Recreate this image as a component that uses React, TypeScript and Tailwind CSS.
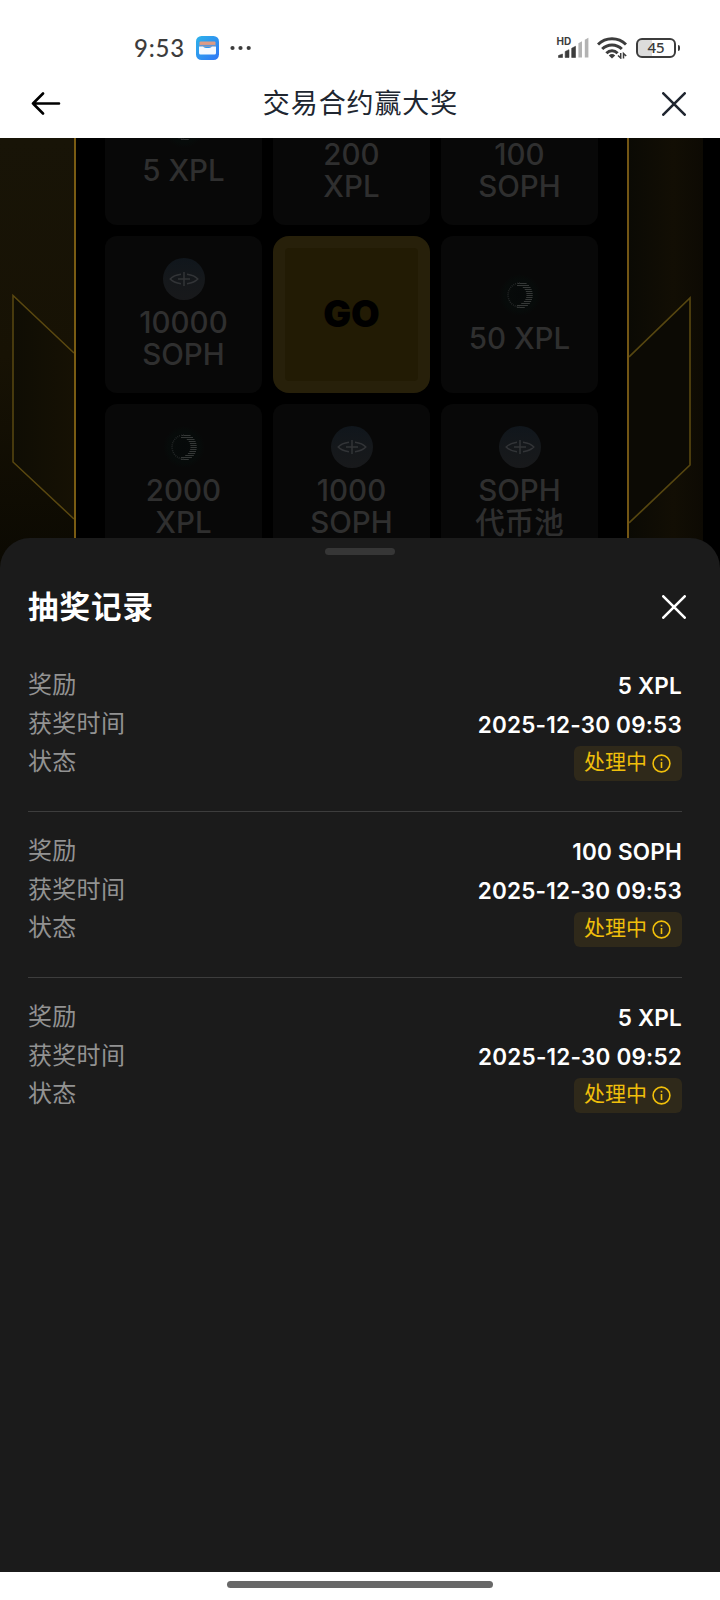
import type { ReactNode } from "react"

type Token = "soph" | "xpl"

interface Prize {
  token: Token
  lines: string[]
}

const ROWS_TOP: Prize[] = [
  { token: "xpl", lines: ["5 XPL"] },
  { token: "xpl", lines: ["200", "XPL"] },
  { token: "soph", lines: ["100", "SOPH"] },
  { token: "soph", lines: ["10000", "SOPH"] },
]

const ROWS_BOTTOM: Prize[] = [
  { token: "xpl", lines: ["50 XPL"] },
  { token: "xpl", lines: ["2000", "XPL"] },
  { token: "soph", lines: ["1000", "SOPH"] },
  { token: "soph", lines: ["SOPH", "代币池"] },
]

const RECORDS = [
  { reward: "5 XPL", time: "2025-12-30 09:53" },
  { reward: "100 SOPH", time: "2025-12-30 09:53" },
  { reward: "5 XPL", time: "2025-12-30 09:52" },
]

export default function App() {
  return (
    <div className="flex h-[1600px] w-[720px] flex-col overflow-hidden bg-white font-['Inter','Noto_Sans_CJK_SC',sans-serif]">
      <StatusBar />
      <Header />
      <PrizeBoard />
      <RecordSheet />
      <div className="flex h-7 shrink-0 justify-center bg-white pt-[9px]">
        <div className="h-[7px] w-[266px] rounded-full bg-[#686868]" />
      </div>
    </div>
  )
}

function StatusBar() {
  return (
    <div className="flex h-[70px] shrink-0 items-center justify-between pt-[26px] pr-[40px] pl-[134px] text-[#3c3c3c]">
      <div className="flex items-center">
        <span className="w-[62px] font-['Lato',sans-serif] text-[24px] leading-none font-medium tracking-[0.8px]">9:53</span>
        <svg width="23" height="24" viewBox="0 0 23 24">
          <defs>
            <linearGradient id="wallet" x1="0" y1="0" x2="1" y2="1">
              <stop offset="0" stopColor="#2eb4ea" />
              <stop offset="1" stopColor="#2f74f5" />
            </linearGradient>
          </defs>
          <rect width="23" height="24" rx="5.5" fill="url(#wallet)" />
          <rect x="3.500" y="5.5" width="16" height="5" rx="1" fill="#dd9b86" />
          <path d="M3 10.500h4c1 1 2.500 1.500 4.500 1.500s3.500-.5 4.500-1.500h4V17a1.500 1.500 0 0 1-1.500 1.500h-14A1.500 1.500 0 0 1 3 17z" fill="#f4f8ff" />
          <path d="M3.500 9.500h16" stroke="#5c95d8" strokeWidth="1.200" />
        </svg>
        <svg className="ml-[11px]" width="22" height="6" viewBox="0 0 22 6" fill="currentColor">
          <circle cx="2.500" cy="3" r="2.100" />
          <circle cx="10.500" cy="3" r="2.100" />
          <circle cx="18.700" cy="3" r="2.100" />
        </svg>
      </div>
      <div className="flex items-center">
        <svg className="overflow-visible" width="32" height="22" viewBox="0 0 32 22" fill="currentColor">
          <text x="-0.500" y="8" fontSize="10" fontWeight="700" fontFamily="Inter">HD</text>
          <path d="M1.500 20.500v-2l4-1.500v3.500zM8.200 20.500v-6l3.800-1.800v7.800zM14.700 20.500v-9.200l3.800-2v11.200z" stroke="currentColor" strokeLinejoin="round" strokeWidth=".6" />
          <path d="M21.400 20.500V6.200l3.600-2v16.300zM27.800 20.500V2.800l3.600-2v19.700z" fill="#b3b3b3" />
        </svg>
        <svg className="ml-[8px]" width="30" height="22" viewBox="0 0 30 22" fill="none" stroke="currentColor" strokeWidth="3">
          <path d="M1 7.500c7.700-7.700 20.300-7.700 28 0" />
          <path d="M5.200 12c5.400-5.500 14.200-5.500 19.600 0" />
          <path d="M9.400 16.200c3.200-3.200 8-3.200 11.200 0" />
          <path d="M11.800 18.500c2-1.900 4.400-1.900 6.400 0L15 21.500z" fill="currentColor" stroke="none" />
          <path d="M23.700 16v5l-2.700-2.500M26.500 21.500v-5l2.700 2.500" strokeWidth="1.500" />
        </svg>
        <div className="ml-[9px] flex h-[20px] w-[40px] items-center justify-center rounded-[6px] border-2 border-[#3c3c3c] bg-linear-to-r from-[#dcdcdc] from-40% to-white to-40%">
          <span className="-mt-px font-['Noto_Sans',sans-serif] text-[15px] leading-none font-medium">45</span>
        </div>
        <div className="ml-[2px] h-[6px] w-[2px] rounded-r bg-[#3c3c3c]" />
      </div>
    </div>
  )
}

function Header() {
  return (
    <header className="flex h-[68px] shrink-0 items-center justify-between pr-[34px] pl-[31px]">
      <svg width="30" height="24" viewBox="0 0 30 24" fill="none" stroke="#000" strokeWidth="2.600" strokeLinecap="round" strokeLinejoin="round">
        <path d="M28 11.500H2M12 1.500l-10 10 10 10" />
      </svg>
      <h1 className="-mt-px -ml-[2px] text-[27px] leading-none font-normal tracking-[0.900px] text-[#202630]">交易合约赢大奖</h1>
      <CloseIcon color="#202630" />
    </header>
  )
}

function CloseIcon({ color }: { color: string }) {
  return (
    <svg width="24" height="24" viewBox="0 0 24 24" fill="none" stroke={color} strokeWidth="2.600" strokeLinecap="round">
      <path d="M1.300 1.300l21.400 21.400M22.700 1.300 1.300 22.700" />
    </svg>
  )
}

function PrizeBoard() {
  return (
    <section className="flex h-[436px] shrink-0 overflow-hidden bg-black">
      {/* Left wing */}
      <div className="w-[76px] shrink-0 border-r-[2px] border-[#795b12] bg-linear-to-b from-[#181407] via-[#171204] to-[#0b0902]">
        <svg width="74" height="436" viewBox="0 0 74 436" fill="none">
          <defs>
            <linearGradient id="wingLeft" x1="0" x2="1">
              <stop offset="0" stopColor="#0f0d04" />
              <stop offset="1" stopColor="#161104" />
            </linearGradient>
          </defs>
          <path d="M13 157.500 74 215v166l-61-57z" fill="url(#wingLeft)" />
          <path d="M74 215 13 157.500V324l61 57" stroke="#5a4810" strokeWidth="1.500" />
        </svg>
      </div>

      <div className="-mt-[70px] grid h-[493px] w-[551px] shrink-0 grid-cols-[157px_157px_157px] grid-rows-[157px_157px_157px] gap-[11px] pl-[29px]">
        {ROWS_TOP.map((prize) => (
          <PrizeCard key={prize.lines.join(" ")} prize={prize} />
        ))}
        <div className="flex items-center justify-center rounded-2xl bg-[#27200a] p-3">
          <div className="flex h-full w-full items-center justify-center rounded-sm bg-[#221b04]">
            <span className="-mt-[2px] text-[37px] leading-none font-black text-black">GO</span>
          </div>
        </div>
        {ROWS_BOTTOM.map((prize) => (
          <PrizeCard key={prize.lines.join(" ")} prize={prize} />
        ))}
      </div>

      {/* Right wing */}
      <div className="w-[76px] shrink-0 border-l-[2px] border-[#735614] bg-linear-to-r from-[#0b0a04] via-[#120e04] via-60% to-[#0d0a03]">
        <svg width="74" height="436" viewBox="0 0 74 436" fill="none">
          <path d="M0 219 61 160v167L0 385z" fill="#0c0a04" />
          <path d="M0 219 61 160v167L0 385" stroke="#564610" strokeWidth="1.700" />
        </svg>
      </div>
    </section>
  )
}

function PrizeCard({ prize }: { prize: Prize }) {
  return (
    <div className="flex flex-col items-center justify-center rounded-xl bg-[#080808]">
      {prize.token === "soph" ? <SophIcon /> : <XplIcon />}
      <p className="mt-[7px] mb-px text-center text-[29.500px] leading-[31.500px] font-medium text-[#2f2f2f]">
        {prize.lines.map((line) => (
          <span key={line} className="block">{line}</span>
        ))}
      </p>
    </div>
  )
}

function SophIcon() {
  return (
    <svg width="42" height="42" viewBox="0 0 42 42" fill="none">
      <defs>
        <linearGradient id="soph" x1="0" y1="0" x2="0" y2="1">
          <stop offset="0" stopColor="#10161c" />
          <stop offset="0.500" stopColor="#15181b" />
          <stop offset="1" stopColor="#18191b" />
        </linearGradient>
      </defs>
      <circle cx="21" cy="21" r="21" fill="url(#soph)" />
      <g stroke="#323437" strokeWidth="1.500">
        <path d="M18 16.300C13 17 9 19 7.200 21c1.800 2 5.800 4 10.800 4.700M24 16.300c5 .7 9 2.700 10.800 4.700-1.800 2-5.800 4-10.800 4.700" />
        <path d="M21 14v14M15 21h12" />
      </g>
    </svg>
  )
}

// horizontal rays between an outer circle and a smaller one shifted left
const XPL_RAYS = Array.from({ length: 13 }, (_, i) => {
  const y = -11.5 + i * 2
  const outer = Math.sqrt(Math.max(0, 190 - y * y))
  const inner = Math.sqrt(Math.max(0, 90 - y * y)) - 3
  return { y: 21 + y, x1: 21 + inner, x2: 20 + outer }
})

function XplIcon() {
  return (
    <svg width="42" height="42" viewBox="0 0 42 42" fill="none">
      <defs>
        <radialGradient id="xpl">
          <stop offset="0" stopColor="#060909" />
          <stop offset="0.750" stopColor="#070b0a" />
          <stop offset="1" stopColor="#080808" />
        </radialGradient>
      </defs>
      <circle cx="21" cy="21" r="21" fill="url(#xpl)" />
      <g stroke="#353837" strokeWidth="1">
        {XPL_RAYS.map((ray) => (
          <path key={ray.y} d={`M${ray.x1} ${ray.y}H${ray.x2}`} />
        ))}
      </g>
      <path d="M21 9a12 12 0 0 0 0 24" stroke="#232626" strokeDasharray="1 1" strokeWidth="1.500" />
    </svg>
  )
}

function RecordSheet() {
  return (
    <section className="relative -mt-9 flex flex-1 flex-col rounded-t-[30px] bg-[#1b1b1b] pt-[10px] text-white">
      <div className="mx-auto h-[7px] w-[70px] shrink-0 rounded-full bg-[#363636]" />
      <div className="flex h-[104px] shrink-0 items-center justify-between pr-[34px] pl-7">
        <h2 className="text-[30.500px] leading-none font-bold tracking-[1px]">抽奖记录</h2>
        <CloseIcon color="#fff" />
      </div>
      <div className="flex flex-col pt-[7px] pr-[38px] pl-7">
        {RECORDS.map((record, i) => (
          <div
            key={i}
            className="mb-[20px] h-[146px] border-b border-[#3d3d3d] last:border-transparent"
          >
            <RecordRow label="奖励">
              <Value>{record.reward}</Value>
            </RecordRow>
            <RecordRow label="获奖时间">
              <Value>{record.time}</Value>
            </RecordRow>
            <RecordRow label="状态">
              <StatusBadge />
            </RecordRow>
          </div>
        ))}
      </div>
    </section>
  )
}

function RecordRow({ label, children }: { label: string; children: ReactNode }) {
  return (
    <div className="flex h-[38.500px] items-center justify-between">
      <span className="text-[24px] leading-none tracking-[0.300px] text-[#929292]">{label}</span>
      {children}
    </div>
  )
}

function Value({ children }: { children: ReactNode }) {
  return <span className="pt-[2px] text-[22.500px] leading-none font-semibold tracking-[0.200px]">{children}</span>
}

function StatusBadge() {
  return (
    <div className="mt-[3px] flex h-[35px] w-[108px] items-center justify-between rounded-[6px] bg-[#2f291a] pr-[11px] pl-[10px] text-[#f0bf0b]">
      <span className="-mt-[4px] text-[21px] leading-none">处理中</span>
      <svg width="19" height="19" viewBox="0 0 19 19" fill="none" stroke="currentColor" strokeWidth="1.600">
        <circle cx="9.500" cy="9.500" r="8.400" />
        <path d="M9.500 8v6M9.500 4.800v1.800" />
      </svg>
    </div>
  )
}
